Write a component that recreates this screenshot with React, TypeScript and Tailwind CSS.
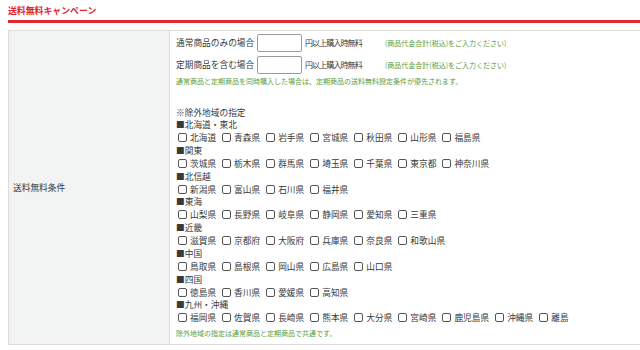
import { useState } from 'react'

const REGIONS = [
  { name: '北海道・東北', prefs: ['北海道', '青森県', '岩手県', '宮城県', '秋田県', '山形県', '福島県'] },
  { name: '関東', prefs: ['茨城県', '栃木県', '群馬県', '埼玉県', '千葉県', '東京都', '神奈川県'] },
  { name: '北信越', prefs: ['新潟県', '富山県', '石川県', '福井県'] },
  { name: '東海', prefs: ['山梨県', '長野県', '岐阜県', '静岡県', '愛知県', '三重県'] },
  { name: '近畿', prefs: ['滋賀県', '京都府', '大阪府', '兵庫県', '奈良県', '和歌山県'] },
  { name: '中国', prefs: ['鳥取県', '島根県', '岡山県', '広島県', '山口県'] },
  { name: '四国', prefs: ['徳島県', '香川県', '愛媛県', '高知県'] },
  { name: '九州・沖縄', prefs: ['福岡県', '佐賀県', '長崎県', '熊本県', '大分県', '宮崎県', '鹿児島県', '沖縄県', '離島'] },
]

function PriceRow({ label }: { label: string }) {
  return (
    <div className="flex items-center h-[20px]">
      <span className="w-[81px]">{label}</span>
      <input type="text" className="w-[45px] h-[18px] border border-[#9a9a9a] rounded-[2px] bg-white outline-none" />
      <span className="ml-[3px] w-[60px] text-[8px] tracking-[-0.9px]">円以上購入時無料</span>
      <span className="ml-[20px] text-[7px] text-[#5c9e3c]">(商品代金合計(税込)をご入力ください)</span>
    </div>
  )
}

export default function App() {
  const [checked, setChecked] = useState<Record<string, boolean>>({})

  return (
    <div
      className="w-[640px] h-[350px] overflow-hidden bg-white text-[#3a3a3a] text-[8.7px]"
      style={{ fontFamily: '"Noto Sans CJK JP", "Noto Sans", sans-serif' }}
    >
      {/* 見出し */}
      <div className="pl-[8px] pt-[5px]">
        <h2 className="text-[8.9px] leading-[12px] font-bold text-[#e0242c]">送料無料キャンペーン</h2>
        <div className="mt-[3px] h-[3px] bg-[#dc2b2f]" />
      </div>

      {/* テーブル */}
      <div className="ml-[8px] mt-[7px] flex border-y border-l border-[#dcdcdc]">
        <div className="w-[161px] shrink-0 flex items-center pl-[4px] bg-[#f2f3f3] border-r border-[#dcdcdc]">
          送料無料条件
        </div>
        <div className="flex-1 pl-[6px] pt-[2px] pb-[5px]">
          <PriceRow label="通常商品のみの場合" />
          <div className="mt-[2px]">
            <PriceRow label="定期商品を含む場合" />
          </div>
          <p className="leading-[12px] text-[7px] text-[#5c9e3c]">
            通常商品と定期商品を同時購入した場合は、定期商品の送料無料設定条件が優先されます。
          </p>

          <p className="mt-[20px] leading-[12px]">※除外地域の指定</p>
          {REGIONS.map(r => (
            <div key={r.name}>
              <p className="leading-[11.5px] h-[11.5px]">■{r.name}</p>
              <div className="flex items-center h-[14.25px] pl-[2px]">
                {r.prefs.map(p => (
                  <label key={p} className="flex items-center mr-[6px]">
                    <input
                      type="checkbox"
                      checked={!!checked[p]}
                      onChange={() => setChecked(c => ({ ...c, [p]: !c[p] }))}
                      className="appearance-none w-[9px] h-[9px] border border-[#555] rounded-[2px] bg-white mr-[3px]"
                    />
                    <span>{p}</span>
                  </label>
                ))}
              </div>
            </div>
          ))}
          <p className="mt-[2px] leading-[12px] text-[7px] text-[#5c9e3c]">
            除外地域の指定は通常商品と定期商品で共通です。
          </p>
        </div>
      </div>
    </div>
  )
}
